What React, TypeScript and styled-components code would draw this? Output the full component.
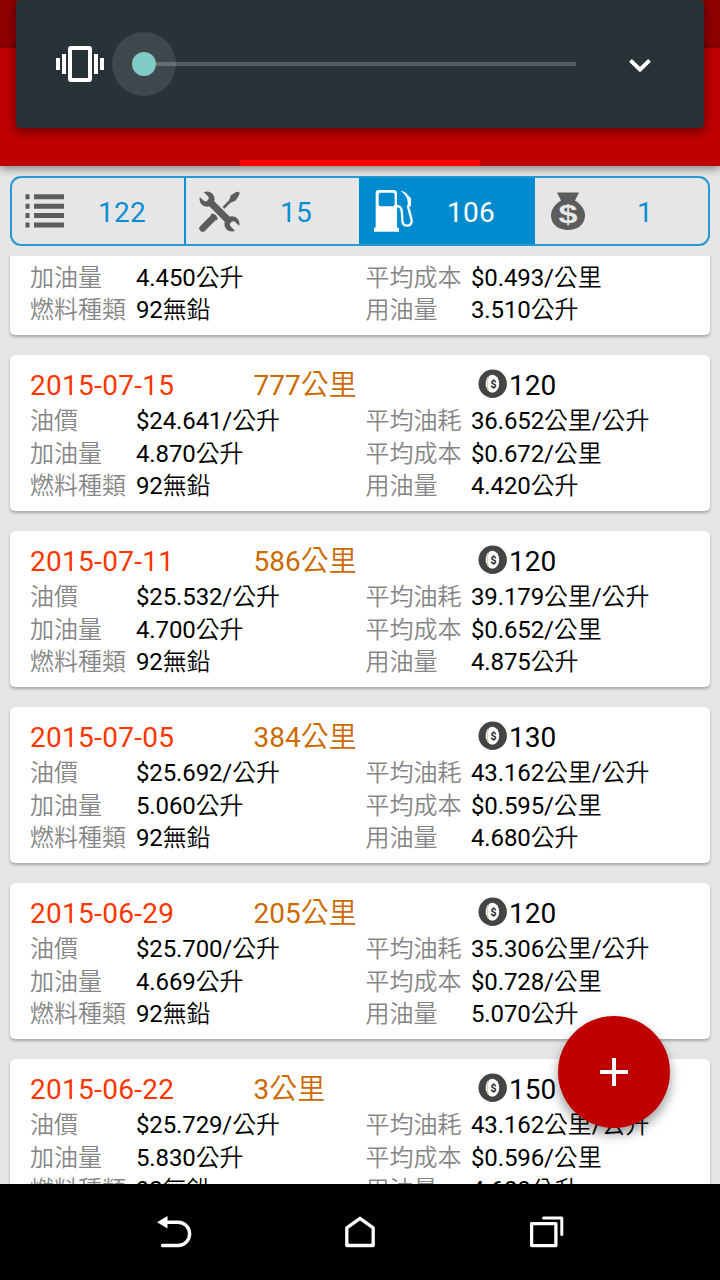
import React from 'react';
import styled, { createGlobalStyle } from 'styled-components';

const GlobalStyle = createGlobalStyle`
  * { box-sizing: border-box; }
  body { margin: 0; background: #e6e6e6; }
`;

const Screen = styled.div`
  position: relative;
  display: flex;
  flex-direction: column;
  width: 720px;
  height: 1280px;
  overflow: hidden;
  background: #e6e6e6;
  font-family: Roboto, 'Noto Sans CJK TC', sans-serif;
  color: #000;
`;

const StatusBar = styled.div`
  flex: none;
  height: 48px;
  background: #900000;
`;

const AppBar = styled.header`
  flex: none;
  display: flex;
  align-items: flex-end;
  justify-content: center;
  height: 118px;
  background: #c00000;
  box-shadow: 0 3px 8px rgba(0, 0, 0, 0.42);
`;

const TabIndicator = styled.div`
  width: 240px;
  height: 6px;
  background: #ff0000;
`;

const VolumePanel = styled.div`
  position: absolute;
  z-index: 3;
  top: 0;
  left: 16px;
  display: flex;
  align-items: center;
  width: 688px;
  height: 128px;
  padding: 0 52px 0 40px;
  border-radius: 4px;
  background: #283237;
  box-shadow: 0 3px 12px rgba(0, 0, 0, 0.5);

  svg {
    flex: none;
  }
`;

const Slider = styled.div`
  flex: none;
  display: flex;
  align-items: center;
  width: 464px;
  margin: 0 52px 0 8px;
`;

const ThumbHalo = styled.div`
  flex: none;
  display: flex;
  align-items: center;
  width: 64px;
  height: 64px;
  border-radius: 50%;
  background: #3d474c;
`;

const Thumb = styled.div`
  flex: none;
  width: 24px;
  height: 24px;
  margin-left: 20px;
  border-radius: 50%;
  background: #80cbc4;
`;

const Track = styled.div<{ $lit?: boolean }>`
  flex: 1;
  height: 4px;
  background: ${(p) => (p.$lit ? '#666d73' : '#545d62')};
`;

const FilterBar = styled.nav`
  flex: none;
  display: flex;
  height: 70px;
  margin: 10px;
  border: 2px solid #2499d3;
  border-radius: 11px;
  overflow: hidden;
`;

const FilterItem = styled.div<{ $active?: boolean; $width: number; $divider?: boolean }>`
  flex: none;
  display: flex;
  align-items: center;
  width: ${(p) => p.$width}px;
  border-right: ${(p) => (p.$divider ? '2px solid #0a8fd0' : '0')};
  background: ${(p) => (p.$active ? '#018bcf' : 'transparent')};
  color: ${(p) => (p.$active ? '#fff' : '#0a8ed2')};
  font-size: 28px;
  line-height: 32px;
`;

const FilterIcon = styled.span<{ $inset?: number }>`
  display: flex;
  justify-content: center;
  width: 42px;
  margin-left: ${(p) => p.$inset ?? 12}px;
`;

const FilterCount = styled.span`
  width: 100px;
  margin: 4px 0 0 6px;
  letter-spacing: 0.3px;
  text-align: center;
`;

const ListViewport = styled.main`
  flex: 1;
  min-height: 0;
  overflow: hidden;
`;

const RecordList = styled.div`
  display: flex;
  flex-direction: column;
  gap: 20px;
  margin-top: -77px;
  padding: 0 10px;
`;

const Card = styled.article`
  flex: none;
  height: 156px;
  padding: 14px 20px 0;
  border-radius: 5px;
  background: #fff;
  box-shadow: 0 2px 3px rgba(0, 0, 0, 0.28);
`;

const CardHeader = styled.div`
  display: grid;
  grid-template-columns: 223.5px 224.5px 1fr;
  height: 36px;
  font-size: 28px;
  line-height: 34px;
  white-space: nowrap;
`;

const DateText = styled.span`
  color: #ff3600;
  letter-spacing: 0.3px;
`;

const Distance = styled.span`
  color: #cc6a00;
`;

const Cost = styled.span`
  display: flex;
  gap: 2px;
`;

const Details = styled.div`
  display: grid;
  grid-template-columns: 106px 229.5px 105.5px 1fr;
  grid-auto-rows: 32.6px;
  font-size: 24px;
  line-height: 33px;
  white-space: nowrap;
`;

const Label = styled.span`
  color: #858585;
  font-weight: 350;
`;

const Value = styled.span`
  letter-spacing: -0.13px;
`;

const Han = styled.span`
  font-weight: 350;
`;

const AddButton = styled.button`
  position: absolute;
  z-index: 2;
  left: 558px;
  top: 1016px;
  display: flex;
  align-items: center;
  justify-content: center;
  width: 112px;
  height: 112px;
  padding: 0;
  border: 0;
  border-radius: 50%;
  background: #c00000;
  box-shadow: 0 6px 12px rgba(0, 0, 0, 0.4);
`;

const NavigationBar = styled.footer`
  flex: none;
  display: flex;
  align-items: center;
  gap: 153px;
  height: 96px;
  padding-left: 157px;
  background: #000;

  svg:last-child {
    margin-left: 2px;
  }
`;

const VibrateIcon = () => (
  <svg width="48" height="36" viewBox="0 0 48 36" fill="#fff">
    <rect x="14" y="2" width="20" height="32" rx="1" fill="none" stroke="#fff" strokeWidth="4" />
    <path d="M0 12h4v12H0zM6 8h4v20H6zM38 8h4v20h-4zM44 12h4v12h-4z" />
  </svg>
);

const ChevronIcon = () => (
  <svg width="24" height="16" viewBox="0 0 24 16">
    <path d="M2.500 4.400 12 13.600 21.500 4.400" fill="none" stroke="#fff" strokeWidth="4" />
  </svg>
);

const ListIcon = () => (
  <svg width="40" height="34" viewBox="0 0 40 34" fill="#5c5c5c">
    {[0, 9.4, 18.8, 28.2].map((y) => (
      <path key={y} d={`M0.500 ${y + 0.3}h4v5h-4zM9 ${y + 0.3}h30v5H9z`} />
    ))}
  </svg>
);

const ToolsIcon = () => (
  <svg width="41" height="41" viewBox="-1 -1 122 122" fill="#5c5c5c" stroke="#5c5c5c">
    <defs>
      <mask id="jaws" maskUnits="userSpaceOnUse" x="-5" y="-5" width="130" height="130">
        <rect x="-5" y="-5" width="130" height="130" fill="#fff" stroke="none" />
        <path d="M-6 -3 18 20M125 123 101 99" stroke="#000" strokeWidth="19" strokeLinecap="round" />
      </mask>
    </defs>
    <g mask="url(#jaws)">
      <circle cx="23" cy="23" r="22.500" stroke="none" />
      <circle cx="97" cy="97" r="22.500" stroke="none" />
      <path d="M31 31 89 89" strokeWidth="21" />
    </g>
    <path d="M10 110 42 78" strokeWidth="20" strokeLinecap="round" />
    <path d="M34 69 38 65 56 81 50 87z" stroke="none" />
    <path d="M72 49 96 25" strokeWidth="8" />
    <path d="M89 26 94 12 110 2 117 1 120 5 118 12 108 27 95 33z" stroke="none" />
  </svg>
);

const FuelIcon = () => (
  <svg width="40" height="42" viewBox="0 0 120 126">
    <path
      fill="#fff"
      fillRule="evenodd"
      d="M5 113V10Q5 0 15 0H59Q69 0 69 10V113H75V125H0V113zM20 8Q14 8 14 14V43Q14 49 20 49H56Q62 49 62 43V14Q62 8 56 8z"
    />
    <path
      d="M68 49C82 47 83 58 84 71C85 92 83 107 99 107C115 107 115 91 110 79L104 57Q101 50 105 41"
      fill="none"
      stroke="#fff"
      strokeWidth="7"
    />
    <path d="M80 3Q94 4 101 15L111 25V49H103L99 25Q94 12 80 3z" fill="#fff" />
  </svg>
);

const MoneyBagIcon = () => (
  <svg width="34" height="39" viewBox="0 0 34 39">
    <path d="M6 .5H28L23.500 9.500H10.500z" fill="#5c5c5c" />
    <path
      d="M11 8H23C29 11 34 17 34 23.500C34 33 26 38 17 38S0 33 0 23.500C0 17 5 11 11 8z"
      fill="#5c5c5c"
    />
    <text
      x="17"
      y="31"
      textAnchor="middle"
      fill="#e6e6e6"
      fontFamily="'Liberation Sans', sans-serif"
      fontWeight="700"
      fontSize="25"
      textLength="19"
      lengthAdjust="spacingAndGlyphs"
    >
      $
    </text>
  </svg>
);

const CoinIcon = () => (
  <svg width="29" height="29" viewBox="0 0 29 29">
    <circle cx="14.700" cy="14.700" r="14.200" fill="#444" />
    <ellipse cx="14.400" cy="14.700" rx="6.800" ry="9" fill="#fff" />
    <path d="M10.700 7.200Q7.700 14.700 10.700 22.200" fill="none" stroke="#777" strokeWidth="0.800" strokeDasharray="1.500 1" />
    <text
      x="15.400"
      y="18.500"
      textAnchor="middle"
      fill="#222"
      fontFamily="Roboto, sans-serif"
      fontWeight="700"
      fontSize="10.500"
    >
      $
    </text>
  </svg>
);

const PlusIcon = () => (
  <svg width="28" height="28" viewBox="0 0 28 28">
    <path d="M14 0V28M0 14H28" stroke="#fff" strokeWidth="4" />
  </svg>
);

const BackIcon = () => (
  <svg width="35" height="32" viewBox="0 0 35 32">
    <path d="M0 6.200 10.500 0V12.400z" fill="#fff" />
    <path
      d="M9 6.200H21A11.600 11.600 0 0 1 21 29.500H5.500"
      fill="none"
      stroke="#fff"
      strokeWidth="3.400"
      strokeLinecap="round"
    />
  </svg>
);

const HomeIcon = () => (
  <svg width="30" height="32" viewBox="0 0 30 32">
    <path
      d="M1.800 29.500V11.800L15 2.300 28.200 11.800V29.500z"
      fill="none"
      stroke="#fff"
      strokeWidth="3.300"
      strokeLinejoin="round"
    />
  </svg>
);

const RecentsIcon = () => (
  <svg width="34" height="32" viewBox="0 0 34 32" fill="none" stroke="#fff" strokeLinejoin="round">
    <rect x="1.600" y="7.600" width="24.300" height="22" strokeWidth="3.300" />
    <path d="M13.600 2.100H31.800V18.600" strokeWidth="3" strokeLinecap="round" />
  </svg>
);

interface FuelRecord {
  date: string;
  distance: string;
  cost: string;
  price: string;
  volume: string;
  economy: string;
  average: string;
  used: string;
}

const records: FuelRecord[] = [
  { date: '', distance: '', cost: '', price: '', volume: '4.450', economy: '', average: '0.493', used: '3.510' },
  { date: '2015-07-15', distance: '777', cost: '120', price: '24.641', volume: '4.870', economy: '36.652', average: '0.672', used: '4.420' },
  { date: '2015-07-11', distance: '586', cost: '120', price: '25.532', volume: '4.700', economy: '39.179', average: '0.652', used: '4.875' },
  { date: '2015-07-05', distance: '384', cost: '130', price: '25.692', volume: '5.060', economy: '43.162', average: '0.595', used: '4.680' },
  { date: '2015-06-29', distance: '205', cost: '120', price: '25.700', volume: '4.669', economy: '35.306', average: '0.728', used: '5.070' },
  { date: '2015-06-22', distance: '3', cost: '150', price: '25.729', volume: '5.830', economy: '43.162', average: '0.596', used: '4.680' },
];

/* Sets the Chinese runs of a string in a slightly lighter weight than its digits. */
const Mixed = ({ text }: { text: string }) => (
  <>
    {text.split(/([\u4e00-\u9fff]+)/).map((part, i) => (i % 2 ? <Han key={i}>{part}</Han> : part))}
  </>
);

const RecordCard = ({ record }: { record: FuelRecord }) => (
  <Card>
    <CardHeader>
      {record.date && (
        <>
          <DateText>{record.date}</DateText>
          <Distance><Mixed text={`${record.distance}公里`} /></Distance>
          <Cost>
            <CoinIcon />
            {record.cost}
          </Cost>
        </>
      )}
    </CardHeader>
    <Details>
      <Label>{record.price && '油價'}</Label>
      <Value>{record.price && <Mixed text={`$${record.price}/公升`} />}</Value>
      <Label>{record.economy && '平均油耗'}</Label>
      <Value>{record.economy && <Mixed text={`${record.economy}公里/公升`} />}</Value>
      <Label>加油量</Label>
      <Value><Mixed text={`${record.volume}公升`} /></Value>
      <Label>平均成本</Label>
      <Value><Mixed text={`$${record.average}/公里`} /></Value>
      <Label>燃料種類</Label>
      <Value><Mixed text="92無鉛" /></Value>
      <Label>用油量</Label>
      <Value><Mixed text={`${record.used}公升`} /></Value>
    </Details>
  </Card>
);

export default function App() {
  return (
    <Screen>
      <GlobalStyle />
      <StatusBar />
      <AppBar>
        <TabIndicator />
      </AppBar>
      <VolumePanel>
        <VibrateIcon />
        <Slider>
          <ThumbHalo>
            <Thumb />
            <Track $lit />
          </ThumbHalo>
          <Track />
        </Slider>
        <ChevronIcon />
      </VolumePanel>
      <FilterBar>
        <FilterItem $width={174} $divider>
          <FilterIcon><ListIcon /></FilterIcon>
          <FilterCount>122</FilterCount>
        </FilterItem>
        <FilterItem $width={173}>
          <FilterIcon><ToolsIcon /></FilterIcon>
          <FilterCount>15</FilterCount>
        </FilterItem>
        <FilterItem $width={176} $active>
          <FilterIcon $inset={14}><FuelIcon /></FilterIcon>
          <FilterCount>106</FilterCount>
        </FilterItem>
        <FilterItem $width={173}>
          <FilterIcon><MoneyBagIcon /></FilterIcon>
          <FilterCount>1</FilterCount>
        </FilterItem>
      </FilterBar>
      <ListViewport>
        <RecordList>
          {records.map((record, i) => (
            <RecordCard key={i} record={record} />
          ))}
        </RecordList>
      </ListViewport>
      <AddButton aria-label="新增">
        <PlusIcon />
      </AddButton>
      <NavigationBar>
        <BackIcon />
        <HomeIcon />
        <RecentsIcon />
      </NavigationBar>
    </Screen>
  );
}
